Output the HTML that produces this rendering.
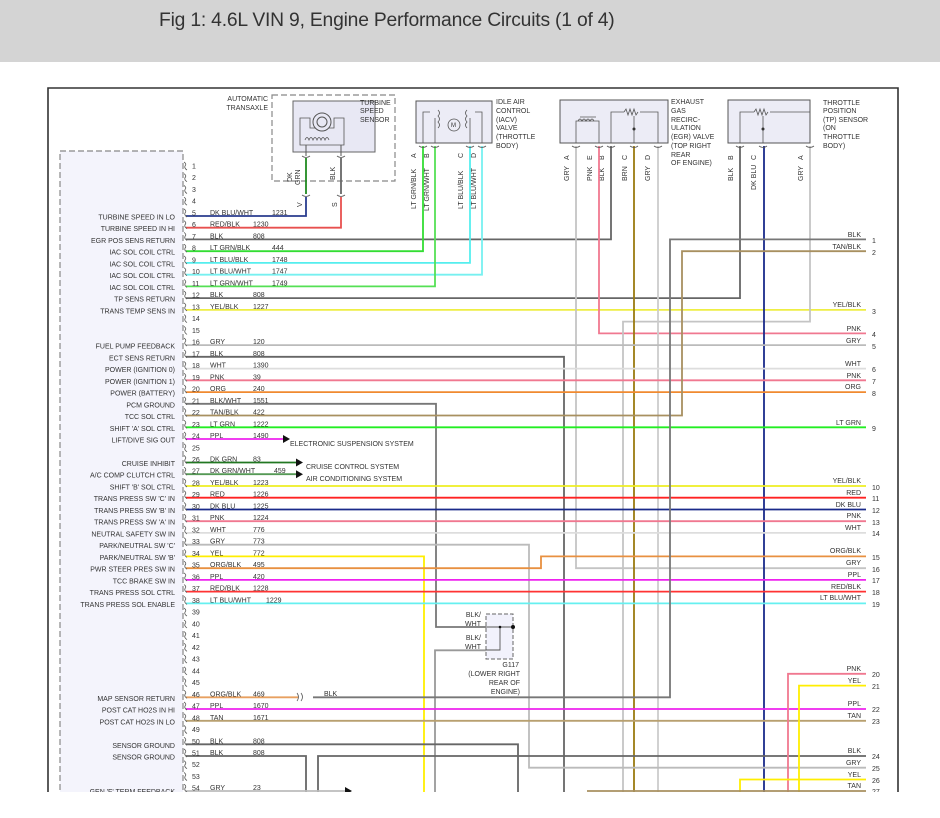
<!DOCTYPE html>
<html><head><meta charset="utf-8"><style>
html,body{margin:0;padding:0;background:#fff;width:940px;height:818px;overflow:hidden}
#hd{position:absolute;left:0;top:0;width:940px;height:62px;background:#d4d4d4}
#hd span{position:absolute;left:159px;top:10px;font-family:"Liberation Sans",sans-serif;font-size:19.3px;color:#333;letter-spacing:-0.2px}
svg{position:absolute;left:0;top:0}
text{font-family:"Liberation Sans",sans-serif;font-size:7px;fill:#333}
.r{text-anchor:end}
.w{fill:none;stroke-width:1.8}
</style></head><body>
<div id="hd"><span>Fig 1: 4.6L VIN 9, Engine Performance Circuits (1 of 4)</span></div>
<svg width="940" height="818" viewBox="0 0 940 818">
<defs><path id="c" d="M0,-4 q3,2 1,4 q-1,2 2,4" fill="none" stroke="#555" stroke-width="0.8"/></defs>
<path d="M48,792 V88 H898 V792" fill="none" stroke="#333" stroke-width="1.6"/>
<rect x="60" y="151" width="123" height="660" fill="#f4f4fc" stroke="#888" stroke-width="1.2" stroke-dasharray="6,3"/>
<rect x="272" y="95" width="123" height="86" fill="#fff" stroke="#888" stroke-width="1.2" stroke-dasharray="6,3"/>
<rect x="293" y="101" width="82" height="51" fill="#e8e8f4" stroke="#666" stroke-width="1"/>
<path d="M300,134 V118 H310 V128 H334 V118 H344 V145 H300 Z" fill="none" stroke="#555" stroke-width="0.8"/>
<circle cx="322" cy="122" r="9" fill="#e8e8f4" stroke="#555" stroke-width="1"/>
<circle cx="322" cy="122" r="5" fill="none" stroke="#555" stroke-width="1"/>
<path d="M305,140 q2,-5 4,0 q2,-5 4,0 q2,-5 4,0 q2,-5 4,0 q2,-5 4,0 q2,-5 4,0" fill="none" stroke="#555" stroke-width="0.8"/>
<path d="M306,145 V156 M341,145 V156" stroke="#555" stroke-width="1"/>
<text x="268" y="101" class="r">AUTOMATIC</text><text x="268" y="110" class="r">TRANSAXLE</text>
<text x="360" y="105">TURBINE</text><text x="360" y="113">SPEED</text><text x="360" y="122">SENSOR</text>
<path d="M306,158 V194" stroke="#1f8a1f" stroke-width="1.8"/>
<path d="M341,158 V194" stroke="#666" stroke-width="1.8"/>
<text transform="translate(292,182) rotate(-90)">DK</text><text transform="translate(300,185) rotate(-90)">GRN</text>
<text transform="translate(335,180) rotate(-90)">BLK</text>
<text transform="translate(302,207) rotate(-90)">V</text><text transform="translate(337,207) rotate(-90)">S</text>
<rect x="416" y="101" width="76" height="42" fill="#ececf6" stroke="#555" stroke-width="1"/>
<circle cx="454" cy="125" r="6" fill="none" stroke="#555" stroke-width="0.8"/><text x="451" y="127" style="font-size:6px">M</text>
<path d="M423,143 V112 H430 M482,143 V112 H475 M435,143 V118 M470,143 V118" fill="none" stroke="#555" stroke-width="0.8"/>
<path d="M438,110 q3,3 0,6 q3,3 0,6 q3,3 0,6 M467,110 q-3,3 0,6 q-3,3 0,6 q-3,3 0,6" fill="none" stroke="#555" stroke-width="0.8"/>
<text x="496" y="104">IDLE AIR</text><text x="496" y="113">CONTROL</text><text x="496" y="122">(IACV)</text><text x="496" y="130">VALVE</text><text x="496" y="139">(THROTTLE</text><text x="496" y="148">BODY)</text>
<text transform="translate(416,158) rotate(-90)">A</text><text transform="translate(429,158) rotate(-90)">B</text><text transform="translate(463,158) rotate(-90)">C</text><text transform="translate(476,158) rotate(-90)">D</text>
<text transform="translate(416,209) rotate(-90)">LT GRN/BLK</text><text transform="translate(429,211) rotate(-90)">LT GRN/WHT</text>
<text transform="translate(463,209) rotate(-90)">LT BLU/BLK</text><text transform="translate(476,209) rotate(-90)">LT BLU/WHT</text>
<rect x="560" y="100" width="108" height="43" fill="#ececf6" stroke="#555" stroke-width="1"/>
<path d="M576,143 V121 H599 V143 M580,117 H596 M611,143 V112 H624 M640,112 H658 V143 M634,143 V116" fill="none" stroke="#555" stroke-width="0.8"/>
<path d="M578,121 q2,-4 4,0 q2,-4 4,0 q2,-4 4,0 q2,-4 4,0 M624,112 l2,-3 l2,6 l2,-6 l2,6 l2,-6 l2,6 l2,-3" fill="none" stroke="#555" stroke-width="0.8"/>
<circle cx="634" cy="129" r="1.5" fill="#333"/>
<text x="671" y="104">EXHAUST</text><text x="671" y="113">GAS</text><text x="671" y="122">RECIRC-</text><text x="671" y="130">ULATION</text><text x="671" y="139">(EGR) VALVE</text><text x="671" y="148">(TOP RIGHT</text><text x="671" y="157">REAR</text><text x="671" y="165">OF ENGINE)</text>
<text transform="translate(569,160) rotate(-90)">A</text><text transform="translate(592,160) rotate(-90)">E</text><text transform="translate(604,160) rotate(-90)">B</text><text transform="translate(627,160) rotate(-90)">C</text><text transform="translate(650,160) rotate(-90)">D</text>
<text transform="translate(569,181) rotate(-90)">GRY</text><text transform="translate(592,181) rotate(-90)">PNK</text><text transform="translate(604,181) rotate(-90)">BLK</text><text transform="translate(627,181) rotate(-90)">BRN</text><text transform="translate(650,181) rotate(-90)">GRY</text>
<rect x="728" y="100" width="82" height="43" fill="#ececf6" stroke="#555" stroke-width="1"/>
<path d="M740,143 V112 H754 M770,112 H810 V143 M763,143 V116" fill="none" stroke="#555" stroke-width="0.8"/>
<path d="M754,112 l2,-3 l2,6 l2,-6 l2,6 l2,-6 l2,6 l2,-3" fill="none" stroke="#555" stroke-width="0.8"/>
<circle cx="763" cy="129" r="1.5" fill="#333"/>
<text x="823" y="105">THROTTLE</text><text x="823" y="113">POSITION</text><text x="823" y="122">(TP) SENSOR</text><text x="823" y="130">(ON</text><text x="823" y="139">THROTTLE</text><text x="823" y="148">BODY)</text>
<text transform="translate(733,160) rotate(-90)">B</text><text transform="translate(756,160) rotate(-90)">C</text><text transform="translate(803,160) rotate(-90)">A</text>
<text transform="translate(733,181) rotate(-90)">BLK</text><text transform="translate(756,190) rotate(-90)">DK BLU</text><text transform="translate(803,181) rotate(-90)">GRY</text>
<g class="w">
<polyline points="186,216 306,216 306,197" stroke="#2a3d8f"/>
<polyline points="186,227.7 341,227.7 341,197" stroke="#e8504f"/>
<polyline points="186,239.4 611,239.4 611,146" stroke="#666"/>
<polyline points="186,251.2 423,251.2 423,146" stroke="#33dd33"/>
<polyline points="186,262.9 470,262.9 470,146" stroke="#55eeee"/>
<polyline points="186,274.7 482,274.7 482,146" stroke="#77f0f0"/>
<polyline points="186,286.4 435,286.4 435,146" stroke="#55e055"/>
<polyline points="186,298.1 740,298.1 740,146" stroke="#666"/>
<polyline points="186,309.9 866,309.9" stroke="#eeee44"/>
<polyline points="576,146 576,568.2 866,568.2" stroke="#c4c4c4"/>
<polyline points="599,146 599,333.4 866,333.4" stroke="#f07890"/>
<polyline points="810,146 810,321.6 623,321.6 623,792" stroke="#c4c4c4"/>
<polyline points="634,146 634,792" stroke="#9a7a10"/>
<polyline points="658,146 658,792" stroke="#cccccc"/>
<polyline points="764,146 764,792" stroke="#1a2a8a"/>
<polyline points="186,345.1 866,345.1" stroke="#bbb"/>
<polyline points="186,356.8 564,356.8 564,792" stroke="#666"/>
<polyline points="186,368.6 866,368.6" stroke="#dddddd"/>
<polyline points="186,380.3 866,380.3" stroke="#f07890"/>
<polyline points="186,392.1 866,392.1" stroke="#f08a30"/>
<polyline points="186,403.8 436,403.8 436,627 486,627" stroke="#777"/>
<polyline points="186,415.5 682,415.5 682,251.2 866,251.2" stroke="#a89060"/>
<polyline points="186,427.3 866,427.3" stroke="#22ee22"/>
<polyline points="186,439 283,439" stroke="#ee22ee"/>
<polyline points="186,462.5 296,462.5" stroke="#227722"/>
<polyline points="186,474.2 296,474.2" stroke="#559955"/>
<polyline points="186,486 866,486" stroke="#eeee22"/>
<polyline points="186,497.7 866,497.7" stroke="#ff2222"/>
<polyline points="186,509.5 866,509.5" stroke="#1a2a8a"/>
<polyline points="186,521.2 866,521.2" stroke="#f07890"/>
<polyline points="186,532.9 866,532.9" stroke="#dddddd"/>
<polyline points="186,544.7 529,544.7 529,767.7 866,767.7" stroke="#bbb"/>
<polyline points="186,556.4 424,556.4 424,792" stroke="#ffee00"/>
<polyline points="186,568.2 541,568.2 541,556.4 866,556.4" stroke="#e89040"/>
<polyline points="186,579.9 866,579.9" stroke="#ee22ee"/>
<polyline points="186,591.6 866,591.6" stroke="#ff3333"/>
<polyline points="186,603.4 866,603.4" stroke="#66f0f0"/>
<polyline points="486,650.3 435,650.3 435,792" stroke="#999"/>
<polyline points="186,697.3 298,697.3" stroke="#e8a060"/>
<polyline points="313,697.3 670,697.3 670,239.4 866,239.4" stroke="#777"/>
<polyline points="186,709 866,709" stroke="#ee22ee"/>
<polyline points="186,720.8 866,720.8" stroke="#b8a070"/>
<polyline points="186,744.3 518,744.3 518,792" stroke="#666"/>
<polyline points="186,756 306,756 306,792" stroke="#666"/>
<polyline points="318,792 318,756 866,756" stroke="#666"/>
<polyline points="186,791 345,791" stroke="#bbb"/>
<polyline points="788,792 788,673.8 866,673.8" stroke="#f07890"/>
<polyline points="799,792 799,685.6 866,685.6" stroke="#ffee00"/>
<polyline points="740,792 740,779.5 866,779.5" stroke="#ffee00"/>
<polyline points="587,791 866,791" stroke="#a89060"/>
</g>
<g fill="none" stroke="#555" stroke-width="0.8">
<path d="M302,156 q4,3 8,0 M337,156 q4,3 8,0 M302,195 q4,3 8,0 M337,195 q4,3 8,0 M419,146 q4,3 8,0 M431,146 q4,3 8,0 M466,146 q4,3 8,0 M478,146 q4,3 8,0 M572,146 q4,3 8,0 M595,146 q4,3 8,0 M607,146 q4,3 8,0 M630,146 q4,3 8,0 M654,146 q4,3 8,0 M736,146 q4,3 8,0 M759,146 q4,3 8,0 M806,146 q4,3 8,0"/>
<path d="M297,693 q3,4 0,8 M301,693 q3,4 0,8"/>
</g>
<path d="M283,435 l7,4 l-7,4 Z M296,458.5 l7,4 l-7,4 Z M296,470.2 l7,4 l-7,4 Z M345,787 l7,4 l-7,4 Z" fill="#111"/>
<text x="290" y="446">ELECTRONIC SUSPENSION SYSTEM</text>
<text x="306" y="469">CRUISE CONTROL SYSTEM</text>
<text x="306" y="481">AIR CONDITIONING SYSTEM</text>
<text x="324" y="696">BLK</text>
<rect x="486" y="614" width="27" height="45" fill="#f2f2fc" stroke="#666" stroke-width="1" stroke-dasharray="4,2"/>
<path d="M486,627 H513 M500,627 V650 H486" fill="none" stroke="#555" stroke-width="0.9"/>
<circle cx="500" cy="627" r="1.3" fill="#111"/><circle cx="513" cy="627" r="2" fill="#111"/>
<text x="481" y="617" class="r">BLK/</text><text x="481" y="626" class="r">WHT</text>
<text x="481" y="640" class="r">BLK/</text><text x="481" y="649" class="r">WHT</text>
<text x="519" y="667" class="r">G117</text><text x="520" y="676" class="r">(LOWER RIGHT</text><text x="520" y="685" class="r">REAR OF</text><text x="520" y="694" class="r">ENGINE)</text>
<g>
<use href="#c" x="184" y="166"/><use href="#c" x="184" y="177.7"/><use href="#c" x="184" y="189.5"/><use href="#c" x="184" y="201.2"/><use href="#c" x="184" y="213"/><use href="#c" x="184" y="224.7"/><use href="#c" x="184" y="236.4"/><use href="#c" x="184" y="248.2"/><use href="#c" x="184" y="259.9"/><use href="#c" x="184" y="271.7"/><use href="#c" x="184" y="283.4"/><use href="#c" x="184" y="295.1"/><use href="#c" x="184" y="306.9"/><use href="#c" x="184" y="318.6"/><use href="#c" x="184" y="330.4"/><use href="#c" x="184" y="342.1"/><use href="#c" x="184" y="353.8"/><use href="#c" x="184" y="365.6"/><use href="#c" x="184" y="377.3"/><use href="#c" x="184" y="389.1"/><use href="#c" x="184" y="400.8"/><use href="#c" x="184" y="412.5"/><use href="#c" x="184" y="424.3"/><use href="#c" x="184" y="436"/><use href="#c" x="184" y="447.8"/><use href="#c" x="184" y="459.5"/><use href="#c" x="184" y="471.2"/><use href="#c" x="184" y="483"/><use href="#c" x="184" y="494.7"/><use href="#c" x="184" y="506.5"/><use href="#c" x="184" y="518.2"/><use href="#c" x="184" y="529.9"/><use href="#c" x="184" y="541.7"/><use href="#c" x="184" y="553.4"/><use href="#c" x="184" y="565.2"/><use href="#c" x="184" y="576.9"/><use href="#c" x="184" y="588.6"/><use href="#c" x="184" y="600.4"/><use href="#c" x="184" y="612.1"/><use href="#c" x="184" y="623.9"/><use href="#c" x="184" y="635.6"/><use href="#c" x="184" y="647.3"/><use href="#c" x="184" y="659.1"/><use href="#c" x="184" y="670.8"/><use href="#c" x="184" y="682.6"/><use href="#c" x="184" y="694.3"/><use href="#c" x="184" y="706"/><use href="#c" x="184" y="717.8"/><use href="#c" x="184" y="729.5"/><use href="#c" x="184" y="741.3"/><use href="#c" x="184" y="753"/><use href="#c" x="184" y="764.7"/><use href="#c" x="184" y="776.5"/><use href="#c" x="184" y="788.2"/>
</g>
<g style="font-size:6.5px">
<text x="192" y="168.5">1</text><text x="192" y="180.2">2</text><text x="192" y="192">3</text><text x="192" y="203.7">4</text><text x="192" y="215.5">5</text><text x="192" y="227.2">6</text><text x="192" y="238.9">7</text><text x="192" y="250.7">8</text><text x="192" y="262.4">9</text><text x="192" y="274.2">10</text><text x="192" y="285.9">11</text><text x="192" y="297.6">12</text><text x="192" y="309.4">13</text><text x="192" y="321.1">14</text><text x="192" y="332.9">15</text><text x="192" y="344.6">16</text><text x="192" y="356.3">17</text><text x="192" y="368.1">18</text><text x="192" y="379.8">19</text><text x="192" y="391.6">20</text><text x="192" y="403.3">21</text><text x="192" y="415">22</text><text x="192" y="426.8">23</text><text x="192" y="438.5">24</text><text x="192" y="450.3">25</text><text x="192" y="462">26</text><text x="192" y="473.7">27</text><text x="192" y="485.5">28</text><text x="192" y="497.2">29</text><text x="192" y="509">30</text><text x="192" y="520.7">31</text><text x="192" y="532.4">32</text><text x="192" y="544.2">33</text><text x="192" y="555.9">34</text><text x="192" y="567.7">35</text><text x="192" y="579.4">36</text><text x="192" y="591.1">37</text><text x="192" y="602.9">38</text><text x="192" y="614.6">39</text><text x="192" y="626.4">40</text><text x="192" y="638.1">41</text><text x="192" y="649.8">42</text><text x="192" y="661.6">43</text><text x="192" y="673.3">44</text><text x="192" y="685.1">45</text><text x="192" y="696.8">46</text><text x="192" y="708.5">47</text><text x="192" y="720.3">48</text><text x="192" y="732">49</text><text x="192" y="743.8">50</text><text x="192" y="755.5">51</text><text x="192" y="767.2">52</text><text x="192" y="779">53</text><text x="192" y="790.7">54</text>
</g>
<g class="r">
<text x="175" y="219.5" class="r">TURBINE SPEED IN LO</text>
<text x="175" y="231.2" class="r">TURBINE SPEED IN HI</text>
<text x="175" y="243" class="r">EGR POS SENS RETURN</text>
<text x="175" y="254.7" class="r">IAC SOL COIL CTRL</text>
<text x="175" y="266.4" class="r">IAC SOL COIL CTRL</text>
<text x="175" y="278.2" class="r">IAC SOL COIL CTRL</text>
<text x="175" y="289.9" class="r">IAC SOL COIL CTRL</text>
<text x="175" y="301.6" class="r">TP SENS RETURN</text>
<text x="175" y="313.4" class="r">TRANS TEMP SENS IN</text>
<text x="175" y="348.6" class="r">FUEL PUMP FEEDBACK</text>
<text x="175" y="360.3" class="r">ECT SENS RETURN</text>
<text x="175" y="372.1" class="r">POWER (IGNITION 0)</text>
<text x="175" y="383.8" class="r">POWER (IGNITION 1)</text>
<text x="175" y="395.6" class="r">POWER (BATTERY)</text>
<text x="175" y="407.3" class="r">PCM GROUND</text>
<text x="175" y="419" class="r">TCC SOL CTRL</text>
<text x="175" y="430.8" class="r">SHIFT 'A' SOL CTRL</text>
<text x="175" y="442.5" class="r">LIFT/DIVE SIG OUT</text>
<text x="175" y="466" class="r">CRUISE INHIBIT</text>
<text x="175" y="477.7" class="r">A/C COMP CLUTCH CTRL</text>
<text x="175" y="489.5" class="r">SHIFT 'B' SOL CTRL</text>
<text x="175" y="501.2" class="r">TRANS PRESS SW 'C' IN</text>
<text x="175" y="513" class="r">TRANS PRESS SW 'B' IN</text>
<text x="175" y="524.7" class="r">TRANS PRESS SW 'A' IN</text>
<text x="175" y="536.4" class="r">NEUTRAL SAFETY SW IN</text>
<text x="175" y="548.2" class="r">PARK/NEUTRAL SW 'C'</text>
<text x="175" y="559.9" class="r">PARK/NEUTRAL SW 'B'</text>
<text x="175" y="571.7" class="r">PWR STEER PRES SW IN</text>
<text x="175" y="583.4" class="r">TCC BRAKE SW IN</text>
<text x="175" y="595.1" class="r">TRANS PRESS SOL CTRL</text>
<text x="175" y="606.9" class="r">TRANS PRESS SOL ENABLE</text>
<text x="175" y="700.8" class="r">MAP SENSOR RETURN</text>
<text x="175" y="712.5" class="r">POST CAT HO2S IN HI</text>
<text x="175" y="724.3" class="r">POST CAT HO2S IN LO</text>
<text x="175" y="747.8" class="r">SENSOR GROUND</text>
<text x="175" y="759.5" class="r">SENSOR GROUND</text>
<text x="175" y="794" class="r">GEN 'F' TERM FEEDBACK</text>
</g>
<g>
<text x="210" y="215">DK BLU/WHT</text><text x="272" y="215">1231</text>
<text x="210" y="226.7">RED/BLK</text><text x="253" y="226.7">1230</text>
<text x="210" y="238.4">BLK</text><text x="253" y="238.4">808</text>
<text x="210" y="250.2">LT GRN/BLK</text><text x="272" y="250.2">444</text>
<text x="210" y="261.9">LT BLU/BLK</text><text x="272" y="261.9">1748</text>
<text x="210" y="273.7">LT BLU/WHT</text><text x="272" y="273.7">1747</text>
<text x="210" y="285.4">LT GRN/WHT</text><text x="272" y="285.4">1749</text>
<text x="210" y="297.1">BLK</text><text x="253" y="297.1">808</text>
<text x="210" y="308.9">YEL/BLK</text><text x="253" y="308.9">1227</text>
<text x="210" y="344.1">GRY</text><text x="253" y="344.1">120</text>
<text x="210" y="355.8">BLK</text><text x="253" y="355.8">808</text>
<text x="210" y="367.6">WHT</text><text x="253" y="367.6">1390</text>
<text x="210" y="379.3">PNK</text><text x="253" y="379.3">39</text>
<text x="210" y="391.1">ORG</text><text x="253" y="391.1">240</text>
<text x="210" y="402.8">BLK/WHT</text><text x="253" y="402.8">1551</text>
<text x="210" y="414.5">TAN/BLK</text><text x="253" y="414.5">422</text>
<text x="210" y="426.3">LT GRN</text><text x="253" y="426.3">1222</text>
<text x="210" y="438">PPL</text><text x="253" y="438">1490</text>
<text x="210" y="461.5">DK GRN</text><text x="253" y="461.5">83</text>
<text x="210" y="473.2">DK GRN/WHT</text><text x="274" y="473.2">459</text>
<text x="210" y="485">YEL/BLK</text><text x="253" y="485">1223</text>
<text x="210" y="496.7">RED</text><text x="253" y="496.7">1226</text>
<text x="210" y="508.5">DK BLU</text><text x="253" y="508.5">1225</text>
<text x="210" y="520.2">PNK</text><text x="253" y="520.2">1224</text>
<text x="210" y="531.9">WHT</text><text x="253" y="531.9">776</text>
<text x="210" y="543.7">GRY</text><text x="253" y="543.7">773</text>
<text x="210" y="555.4">YEL</text><text x="253" y="555.4">772</text>
<text x="210" y="567.2">ORG/BLK</text><text x="253" y="567.2">495</text>
<text x="210" y="578.9">PPL</text><text x="253" y="578.9">420</text>
<text x="210" y="590.6">RED/BLK</text><text x="253" y="590.6">1228</text>
<text x="210" y="602.4">LT BLU/WHT</text><text x="266" y="602.4">1229</text>
<text x="210" y="696.3">ORG/BLK</text><text x="253" y="696.3">469</text>
<text x="210" y="708">PPL</text><text x="253" y="708">1670</text>
<text x="210" y="719.8">TAN</text><text x="253" y="719.8">1671</text>
<text x="210" y="743.3">BLK</text><text x="253" y="743.3">808</text>
<text x="210" y="755">BLK</text><text x="253" y="755">808</text>
<text x="210" y="790">GRY</text><text x="253" y="790">23</text>
</g>
<g>
<text x="861" y="237" class="r">BLK</text><text x="872" y="243">1</text>
<text x="861" y="249" class="r">TAN/BLK</text><text x="872" y="255">2</text>
<text x="861" y="307" class="r">YEL/BLK</text><text x="872" y="314">3</text>
<text x="861" y="331" class="r">PNK</text><text x="872" y="337">4</text>
<text x="861" y="343" class="r">GRY</text><text x="872" y="349">5</text>
<text x="861" y="366" class="r">WHT</text><text x="872" y="372">6</text>
<text x="861" y="378" class="r">PNK</text><text x="872" y="384">7</text>
<text x="861" y="389" class="r">ORG</text><text x="872" y="396">8</text>
<text x="861" y="425" class="r">LT GRN</text><text x="872" y="431">9</text>
<text x="861" y="483" class="r">YEL/BLK</text><text x="872" y="490">10</text>
<text x="861" y="495" class="r">RED</text><text x="872" y="501">11</text>
<text x="861" y="507" class="r">DK BLU</text><text x="872" y="513">12</text>
<text x="861" y="518" class="r">PNK</text><text x="872" y="525">13</text>
<text x="861" y="530" class="r">WHT</text><text x="872" y="536">14</text>
<text x="861" y="553" class="r">ORG/BLK</text><text x="872" y="560">15</text>
<text x="861" y="565" class="r">GRY</text><text x="872" y="572">16</text>
<text x="861" y="577" class="r">PPL</text><text x="872" y="583">17</text>
<text x="861" y="589" class="r">RED/BLK</text><text x="872" y="595">18</text>
<text x="861" y="600" class="r">LT BLU/WHT</text><text x="872" y="607">19</text>
<text x="861" y="671" class="r">PNK</text><text x="872" y="677">20</text>
<text x="861" y="683" class="r">YEL</text><text x="872" y="689">21</text>
<text x="861" y="706" class="r">PPL</text><text x="872" y="712">22</text>
<text x="861" y="718" class="r">TAN</text><text x="872" y="724">23</text>
<text x="861" y="753" class="r">BLK</text><text x="872" y="759">24</text>
<text x="861" y="765" class="r">GRY</text><text x="872" y="771">25</text>
<text x="861" y="777" class="r">YEL</text><text x="872" y="783">26</text>
<text x="861" y="788" class="r">TAN</text><text x="872" y="794">27</text>
</g>
<rect x="0" y="792" width="940" height="26" fill="#fff"/>
</svg>
</body></html>
